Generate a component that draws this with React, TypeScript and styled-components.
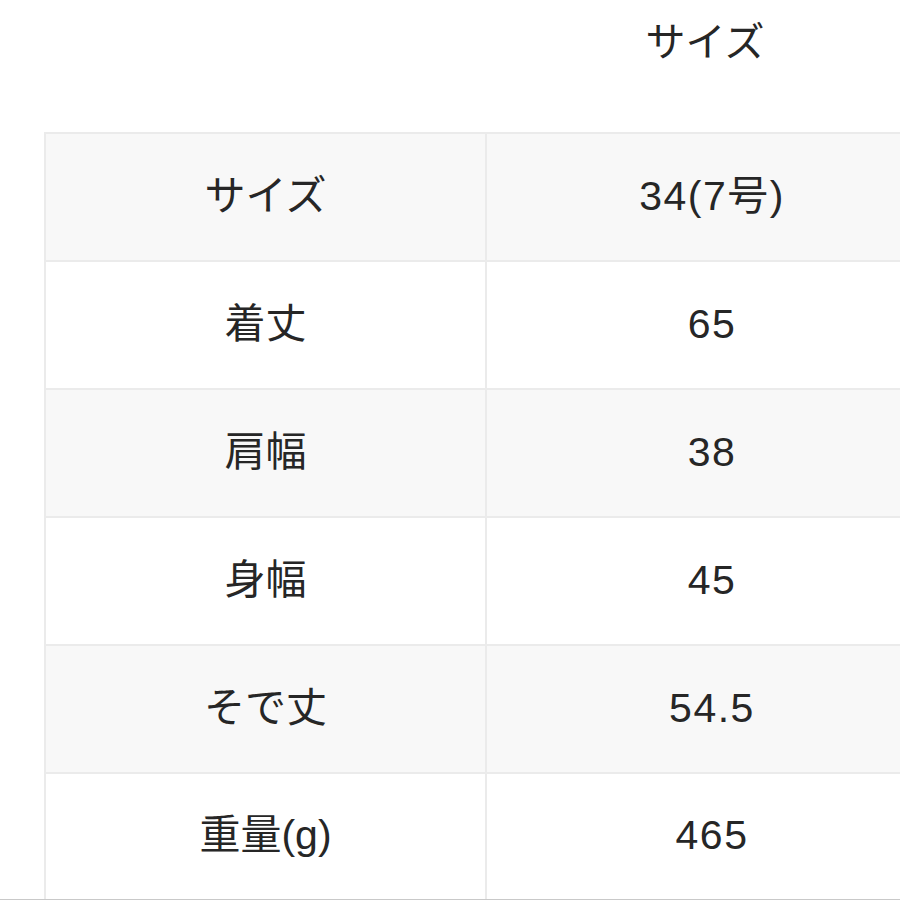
import React from "react";
import styled, { createGlobalStyle } from "styled-components";

const GlobalStyle = createGlobalStyle`
  html, body {
    margin: 0;
    padding: 0;
    background: #ffffff;
    overflow: hidden;
  }
  body {
    width: 900px;
    height: 900px;
    font-family: "Liberation Sans", "Noto Sans CJK JP", sans-serif;
    color: #262626;
  }
`;

const Page = styled.div`
  width: 900px;
  height: 900px;
  overflow: hidden;
  display: flex;
  flex-direction: column;
`;

const Caption = styled.div`
  flex-shrink: 0;
  height: 132px;
  display: grid;
  grid-template-columns: 441px 452px;
  padding-left: 45px;
  box-sizing: border-box;
`;

const CaptionText = styled.div`
  grid-column: 2;
  font-size: 40px;
  line-height: 1;
  padding-top: 22px;
  padding-right: 14px;
  text-align: center;
`;

const Table = styled.div`
  flex-shrink: 0;
  margin-left: 44px;
  width: 900px;
  display: grid;
  grid-template-columns: 441px 452px;
  border-top: 2px solid #ebebeb;
  border-left: 2px solid #ebebeb;
  box-sizing: border-box;
`;

const Cell = styled.div<{ $shaded: boolean; $last: boolean }>`
  height: ${(p) => (p.$last ? "125px" : "128px")};
  box-sizing: border-box;
  display: flex;
  align-items: center;
  justify-content: center;
  background: ${(p) => (p.$shaded ? "#f8f8f8" : "#ffffff")};
  border-right: 2px solid #ebebeb;
  border-bottom: ${(p) => (p.$last ? "none" : "2px solid #ebebeb")};
  font-size: 41px;
  line-height: 1;
  padding-bottom: 2px;
`;

const Digits = styled.span`
  letter-spacing: 1.5px;
`;

const BottomRule = styled.div`
  flex-shrink: 0;
  height: 2px;
  width: 900px;
  background: #c9c9c9;
`;

const rows: [string, string][] = [
  ["サイズ", "34(7号)"],
  ["着丈", "65"],
  ["肩幅", "38"],
  ["身幅", "45"],
  ["そで丈", "54.5"],
  ["重量(g)", "465"],
];

export default function App() {
  return (
    <>
      <GlobalStyle />
      <Page>
        <Caption>
          <CaptionText>サイズ</CaptionText>
        </Caption>
        <Table>
          {rows.map(([label, value], i) => {
            const shaded = i % 2 === 0;
            const last = i === rows.length - 1;
            return (
              <React.Fragment key={label}>
                <Cell $shaded={shaded} $last={last}>
                  {label}
                </Cell>
                <Cell $shaded={shaded} $last={last}>
                  <Digits>{value}</Digits>
                </Cell>
              </React.Fragment>
            );
          })}
        </Table>
        <BottomRule />
      </Page>
    </>
  );
}
